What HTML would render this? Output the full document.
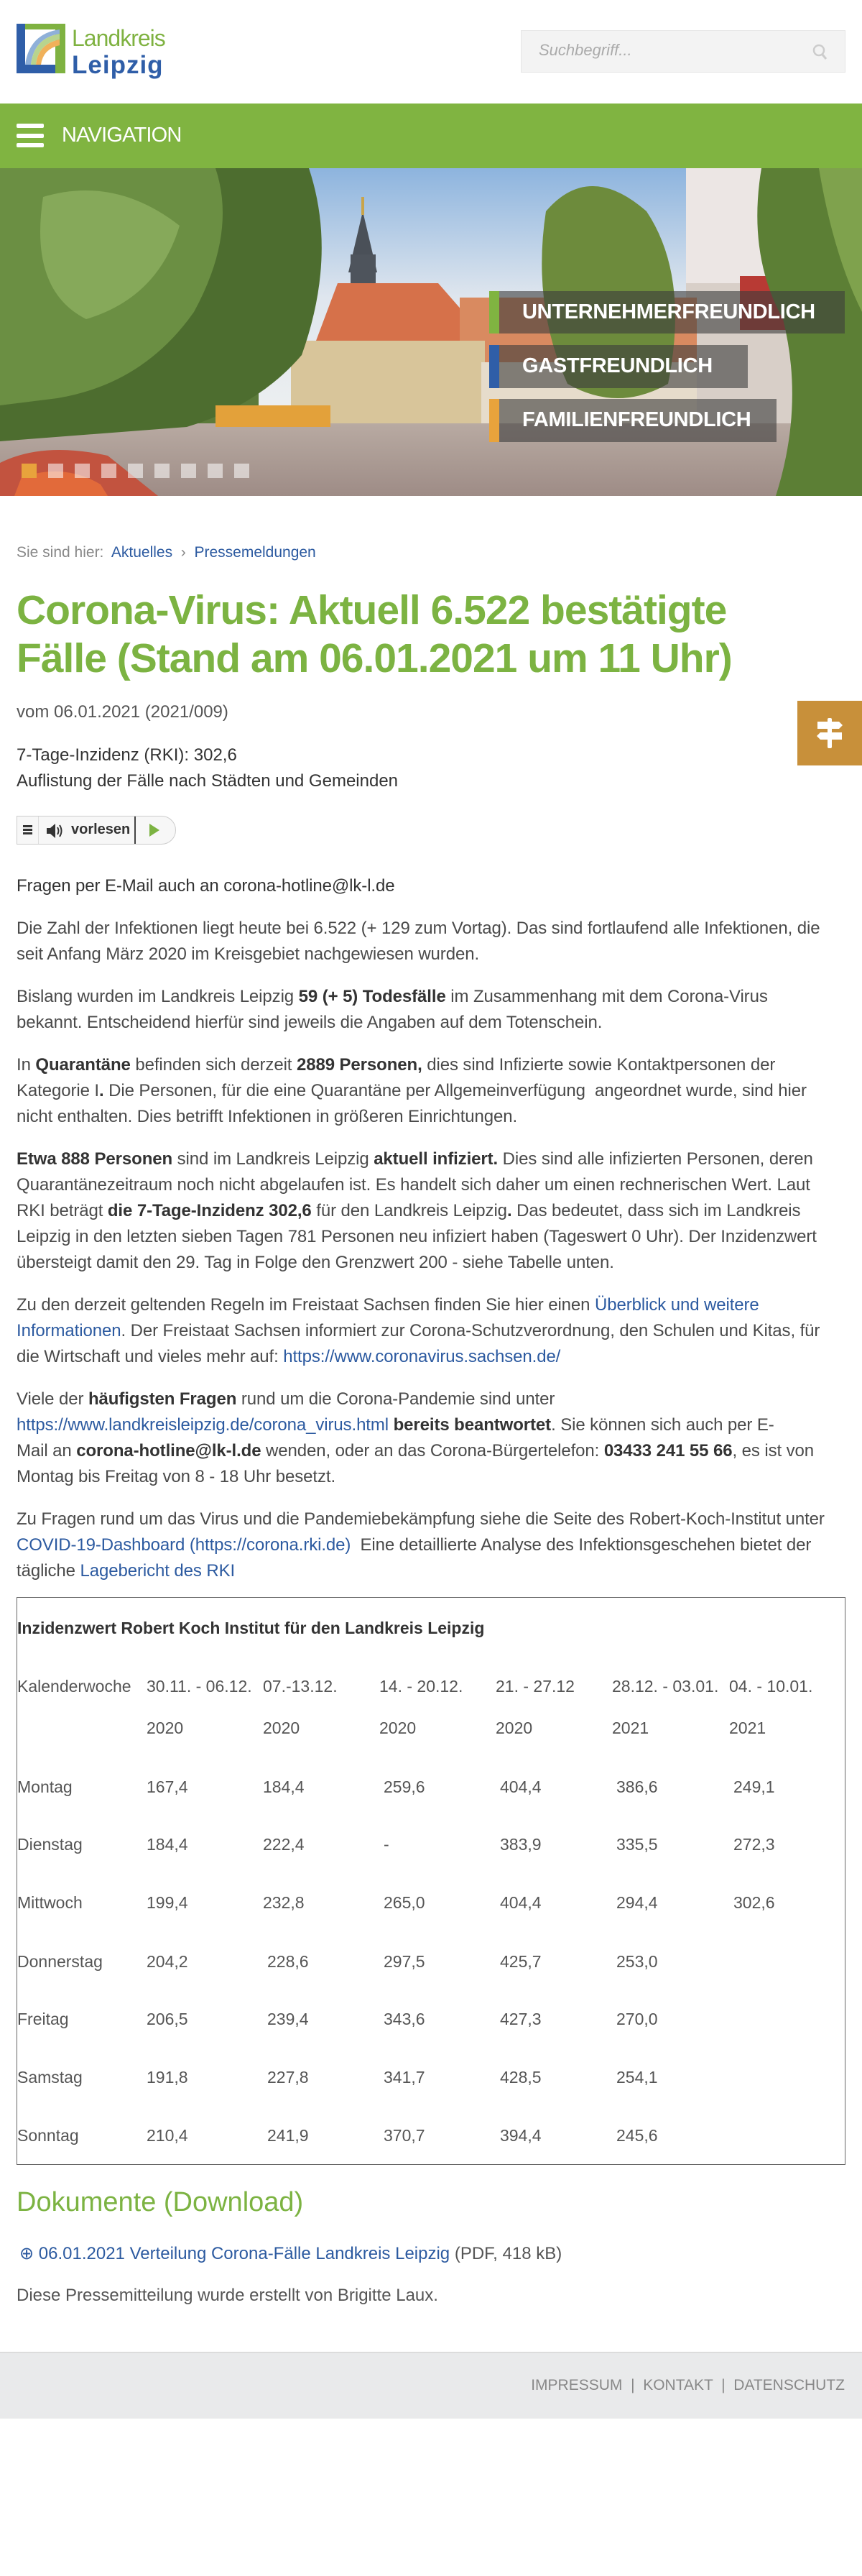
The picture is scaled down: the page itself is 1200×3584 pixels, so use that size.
<!DOCTYPE html>
<html><head><meta charset="utf-8">
<style>
*{margin:0;padding:0;box-sizing:border-box}
html,body{width:1200px;height:3584px;background:#fff;overflow:hidden}
body{position:relative;font-family:"Liberation Sans",Arial,sans-serif;color:#444}
.a{position:absolute;white-space:nowrap}
b{color:#333;font-weight:bold}
.lnk{color:#2c5aa0}
.flow{position:absolute;left:23px;top:1215px;font-size:24px;line-height:36px;color:#4a4a4a;white-space:nowrap;letter-spacing:-0.1px}
.flow p{margin-bottom:23px}
.cell{position:absolute;font-size:23px;color:#555;white-space:nowrap;line-height:30px}
</style></head><body>

<!-- logo -->
<svg class="a" style="left:23px;top:33px" width="210" height="80" viewBox="0 0 210 80">
 <rect x="0" y="0" width="68" height="69" fill="#2f5ea8"/>
 <rect x="12" y="0" width="56" height="57" fill="#fff"/>
 <rect x="54" y="0" width="14" height="69" fill="#7fb241"/>
 <rect x="12" y="0" width="56" height="8" fill="#7fb241"/>
 <path d="M12 57 Q18 14 60 8 L60 14 Q24 20 20 57Z" fill="#8fb0d8"/>
 <path d="M20 57 Q24 20 60 14 L60 22 Q30 28 27 57Z" fill="#b8d48e"/>
 <path d="M27 57 Q30 28 60 22 L60 30 Q37 35 34 57Z" fill="#f0b15a"/>
 <text x="77" y="31" font-family="Liberation Sans" font-size="32" fill="#7fb241" letter-spacing="-1">Landkreis</text>
 <text x="77" y="69" font-family="Liberation Sans" font-size="35" font-weight="bold" fill="#2f5ea8" letter-spacing="1">Leipzig</text>
</svg>

<!-- search -->
<div class="a" style="left:725px;top:42px;width:452px;height:59px;background:#f3f3f3;border:1px solid #e6e6e6"></div>
<div class="a" style="left:750px;top:57px;font-size:22px;font-style:italic;color:#aaa">Suchbegriff...</div>
<svg class="a" style="left:1130px;top:60px" width="24" height="26" viewBox="0 0 24 26"><circle cx="10" cy="10" r="7" fill="none" stroke="#ccc" stroke-width="2.5"/><path d="M15 16 L20 22" stroke="#ccc" stroke-width="3"/></svg>

<!-- nav -->
<div class="a" style="left:0;top:144px;width:1200px;height:90px;background:#80b441"></div>
<div class="a" style="left:23px;top:172px;width:38px;height:6px;background:#fff;border-radius:2px"></div>
<div class="a" style="left:23px;top:186px;width:38px;height:6px;background:#fff;border-radius:2px"></div>
<div class="a" style="left:23px;top:199px;width:38px;height:6px;background:#fff;border-radius:2px"></div>
<div class="a" style="left:86px;top:172px;font-size:29px;color:#fff;letter-spacing:-0.8px">NAVIGATION</div>

<!-- hero -->
<svg class="a" style="left:0;top:234px" width="1200" height="456" viewBox="0 0 1200 456">
 <defs><linearGradient id="sky" x1="0" y1="0" x2="0" y2="1"><stop offset="0" stop-color="#8db4de"/><stop offset="0.5" stop-color="#dfe6ee"/><stop offset="1" stop-color="#eef0f0"/></linearGradient>
 <linearGradient id="gr" x1="0" y1="0" x2="0" y2="1"><stop offset="0" stop-color="#b8aaa2"/><stop offset="1" stop-color="#9e8c86"/></linearGradient></defs>
 <rect width="1200" height="456" fill="#5b7a3a"/>
 <rect x="360" y="0" width="600" height="360" fill="url(#sky)"/>
 <rect x="955" y="0" width="245" height="370" fill="#ece6e4"/>
 <rect x="955" y="160" width="245" height="210" fill="#d8cfc8"/>
 <rect x="1030" y="150" width="70" height="75" fill="#b83a34"/>
 <path d="M485 145 L505 60 L525 145Z" fill="#4a5058"/>
 <rect x="488" y="120" width="35" height="90" fill="#4e545c"/>
 <rect x="503" y="40" width="4" height="25" fill="#c9a44a"/>
 <path d="M440 240 L470 160 L610 160 L680 240Z" fill="#d6714a"/>
 <rect x="640" y="180" width="330" height="90" fill="#d98a60"/>
 <rect x="405" y="240" width="270" height="150" fill="#d8c59a"/>
 <rect x="670" y="270" width="300" height="110" fill="#e6dccb"/>
 <rect x="0" y="355" width="1200" height="101" fill="url(#gr)"/>
 <path d="M0 0 H430 Q470 120 420 260 Q360 330 260 360 L0 380Z" fill="#4d6d2f"/>
 <path d="M0 0 H300 Q330 90 270 200 Q200 300 80 320 L0 330Z" fill="#6b8f43"/>
 <path d="M60 40 Q160 10 250 80 Q220 180 120 210 Q40 170 60 40Z" fill="#86a95a"/>
 <path d="M760 60 Q820 -10 900 60 Q960 150 930 300 Q860 340 790 300 Q740 190 760 60Z" fill="#6d8b3c"/>
 <path d="M1060 0 H1200 V456 H1080 Q1120 330 1090 210 Q1040 120 1060 0Z" fill="#5c7f35"/>
 <path d="M1140 0 H1200 V200 Q1160 120 1140 0Z" fill="#7fa24d"/>
 <rect x="300" y="330" width="160" height="30" fill="#e3a13a"/>
 <path d="M0 410 Q60 380 150 400 L220 456 H0Z" fill="#c2533f"/>
 <path d="M30 430 Q90 410 140 440 L150 456 H20Z" fill="#e26a3a"/>
</svg>
<div class="a" style="left:30px;top:645px;width:21px;height:20px;background:#e8a33c"></div>
<div class="a" style="left:67px;top:645px;width:21px;height:20px;background:rgba(255,255,255,.55)"></div>
<div class="a" style="left:104px;top:645px;width:21px;height:20px;background:rgba(255,255,255,.55)"></div>
<div class="a" style="left:141px;top:645px;width:21px;height:20px;background:rgba(255,255,255,.55)"></div>
<div class="a" style="left:178px;top:645px;width:21px;height:20px;background:rgba(255,255,255,.55)"></div>
<div class="a" style="left:215px;top:645px;width:21px;height:20px;background:rgba(255,255,255,.55)"></div>
<div class="a" style="left:252px;top:645px;width:21px;height:20px;background:rgba(255,255,255,.55)"></div>
<div class="a" style="left:289px;top:645px;width:21px;height:20px;background:rgba(255,255,255,.55)"></div>
<div class="a" style="left:326px;top:645px;width:21px;height:20px;background:rgba(255,255,255,.55)"></div>

<div class="a" style="left:681px;top:405px;width:495px;height:59px;background:rgba(60,60,60,.6);border-left:14px solid #80b441"></div>
<div class="a" style="left:681px;top:480px;width:360px;height:60px;background:rgba(60,60,60,.6);border-left:14px solid #2f5ea8"></div>
<div class="a" style="left:681px;top:555px;width:400px;height:60px;background:rgba(60,60,60,.6);border-left:14px solid #e8a33c"></div>
<div class="a" style="left:727px;top:418px;font-size:29px;font-weight:bold;color:#fff;letter-spacing:-0.3px">UNTERNEHMERFREUNDLICH</div>
<div class="a" style="left:727px;top:493px;font-size:29px;font-weight:bold;color:#fff;letter-spacing:-0.3px">GASTFREUNDLICH</div>
<div class="a" style="left:727px;top:568px;font-size:29px;font-weight:bold;color:#fff;letter-spacing:-0.3px">FAMILIENFREUNDLICH</div>

<!-- breadcrumb -->
<div class="a" style="left:23px;top:757px;font-size:21px;color:#888">Sie sind hier:&nbsp; <span class="lnk">Aktuelles</span> &nbsp;›&nbsp; <span class="lnk">Pressemeldungen</span></div>

<!-- title -->
<div class="a" style="left:23px;top:816px;font-size:57px;line-height:67px;font-weight:bold;color:#7cb342;letter-spacing:-1px">Corona-Virus: Aktuell 6.522 bestätigte<br>Fälle (Stand am 06.01.2021 um 11 Uhr)</div>

<div class="a" style="left:23px;top:977px;font-size:24px;color:#555">vom 06.01.2021 (2021/009)</div>
<div class="a" style="left:23px;top:1033px;font-size:24px;line-height:36px;color:#333">7-Tage-Inzidenz (RKI): 302,6<br>Auflistung der Fälle nach Städten und Gemeinden</div>

<!-- side button -->
<div class="a" style="left:1110px;top:975px;width:90px;height:90px;background:#c8903a"></div>
<svg class="a" style="left:1130px;top:995px" width="50" height="50" viewBox="0 0 50 50"><rect x="22" y="4" width="6" height="42" rx="2" fill="#fff"/><path d="M8 9 H38 L43 14 L38 19 H8Z" fill="#fff"/><path d="M42 24 H12 L7 29 L12 34 H42Z" fill="#fff"/></svg>

<!-- vorlesen -->
<div class="a" style="left:23px;top:1135px;width:222px;height:40px;border:1px solid #ccc;border-radius:0 20px 20px 0;background:#f7f7f7"></div>
<div class="a" style="left:53px;top:1136px;width:1px;height:38px;background:#ddd"></div>
<div class="a" style="left:187px;top:1136px;width:2px;height:38px;background:#444"></div>
<div class="a" style="left:32px;top:1148px;width:13px;height:3px;background:#333"></div>
<div class="a" style="left:32px;top:1153px;width:13px;height:3px;background:#333"></div>
<div class="a" style="left:32px;top:1158px;width:13px;height:3px;background:#333"></div>
<svg class="a" style="left:64px;top:1145px" width="26" height="22" viewBox="0 0 26 22"><path d="M1 7 H6 L13 1 V21 L6 15 H1Z" fill="#333"/><path d="M16 6 Q19 11 16 16 M19 3 Q24 11 19 19" stroke="#333" stroke-width="2" fill="none"/></svg>
<div class="a" style="left:99px;top:1143px;font-size:20px;font-weight:bold;color:#333">vorlesen</div>
<svg class="a" style="left:207px;top:1145px" width="16" height="20" viewBox="0 0 16 20"><path d="M1 1 L15 10 L1 19Z" fill="#7cb342"/></svg>

<!-- body -->
<div class="flow">
<p style="color:#333">Fragen per E-Mail auch an corona-hotline@lk-l.de</p>
<p>Die Zahl der Infektionen liegt heute bei 6.522 (+ 129 zum Vortag). Das sind fortlaufend alle Infektionen, die<br>seit Anfang März 2020 im Kreisgebiet nachgewiesen wurden.</p>
<p>Bislang wurden im Landkreis Leipzig <b>59 (+ 5) Todesfälle</b> im Zusammenhang mit dem Corona-Virus<br>bekannt. Entscheidend hierfür sind jeweils die Angaben auf dem Totenschein.</p>
<p>In <b>Quarantäne</b> befinden sich derzeit <b>2889 Personen,</b> dies sind Infizierte sowie Kontaktpersonen der<br>Kategorie I<b>.</b> Die Personen, für die eine Quarantäne per Allgemeinverfügung&nbsp; angeordnet wurde, sind hier<br>nicht enthalten. Dies betrifft Infektionen in größeren Einrichtungen.</p>
<p><b>Etwa 888 Personen</b> sind im Landkreis Leipzig <b>aktuell infiziert.</b> Dies sind alle infizierten Personen, deren<br>Quarantänezeitraum noch nicht abgelaufen ist. Es handelt sich daher um einen rechnerischen Wert. Laut<br>RKI beträgt <b>die 7-Tage-Inzidenz 302,6</b> für den Landkreis Leipzig<b>.</b> Das bedeutet, dass sich im Landkreis<br>Leipzig in den letzten sieben Tagen 781 Personen neu infiziert haben (Tageswert 0 Uhr). Der Inzidenzwert<br>übersteigt damit den 29. Tag in Folge den Grenzwert 200 - siehe Tabelle unten.</p>
<p>Zu den derzeit geltenden Regeln im Freistaat Sachsen finden Sie hier einen <span class="lnk">Überblick und weitere</span><br><span class="lnk">Informationen</span>. Der Freistaat Sachsen informiert zur Corona-Schutzverordnung, den Schulen und Kitas, für<br>die Wirtschaft und vieles mehr auf: <span class="lnk">https://www.coronavirus.sachsen.de/</span></p>
<p>Viele der <b>häufigsten Fragen</b> rund um die Corona-Pandemie sind unter<br><span class="lnk">https://www.landkreisleipzig.de/corona_virus.html</span> <b>bereits beantwortet</b>. Sie können sich auch per E-<br>Mail an <b>corona-hotline@lk-l.de</b> wenden, oder an das Corona-Bürgertelefon: <b>03433 241 55 66</b>, es ist von<br>Montag bis Freitag von 8 - 18 Uhr besetzt.</p>
<p>Zu Fragen rund um das Virus und die Pandemiebekämpfung siehe die Seite des Robert-Koch-Institut unter<br><span class="lnk">COVID-19-Dashboard (https://corona.rki.de)</span>&nbsp; Eine detaillierte Analyse des Infektionsgeschehen bietet der<br>tägliche <span class="lnk">Lagebericht des RKI</span></p>
</div>

<!-- table -->
<div class="a" style="left:23px;top:2222px;width:1154px;height:790px;border:1px solid #666"></div>
<div class="cell" style="left:24px;top:2250px;font-weight:bold;color:#333">Inzidenzwert Robert Koch Institut für den Landkreis Leipzig</div>
<div class="cell" style="left:24px;top:2331px">Kalenderwoche</div>
<div class="cell" style="left:204px;top:2331px">30.11. - 06.12.</div>
<div class="cell" style="left:366px;top:2331px">07.-13.12.</div>
<div class="cell" style="left:528px;top:2331px">14. - 20.12.</div>
<div class="cell" style="left:690px;top:2331px">21. - 27.12</div>
<div class="cell" style="left:852px;top:2331px">28.12. - 03.01.</div>
<div class="cell" style="left:1015px;top:2331px">04. - 10.01.</div>
<div class="cell" style="left:204px;top:2389px">2020</div>
<div class="cell" style="left:366px;top:2389px">2020</div>
<div class="cell" style="left:528px;top:2389px">2020</div>
<div class="cell" style="left:690px;top:2389px">2020</div>
<div class="cell" style="left:852px;top:2389px">2021</div>
<div class="cell" style="left:1015px;top:2389px">2021</div>

<div class="cell" style="left:24px;top:2471px">Montag</div><div class="cell" style="left:204px;top:2471px">167,4</div><div class="cell" style="left:366px;top:2471px">184,4</div><div class="cell" style="left:534px;top:2471px">259,6</div><div class="cell" style="left:696px;top:2471px">404,4</div><div class="cell" style="left:858px;top:2471px">386,6</div><div class="cell" style="left:1021px;top:2471px">249,1</div>
<div class="cell" style="left:24px;top:2551px">Dienstag</div><div class="cell" style="left:204px;top:2551px">184,4</div><div class="cell" style="left:366px;top:2551px">222,4</div><div class="cell" style="left:534px;top:2551px">-</div><div class="cell" style="left:696px;top:2551px">383,9</div><div class="cell" style="left:858px;top:2551px">335,5</div><div class="cell" style="left:1021px;top:2551px">272,3</div>
<div class="cell" style="left:24px;top:2632px">Mittwoch</div><div class="cell" style="left:204px;top:2632px">199,4</div><div class="cell" style="left:366px;top:2632px">232,8</div><div class="cell" style="left:534px;top:2632px">265,0</div><div class="cell" style="left:696px;top:2632px">404,4</div><div class="cell" style="left:858px;top:2632px">294,4</div><div class="cell" style="left:1021px;top:2632px">302,6</div>
<div class="cell" style="left:24px;top:2714px">Donnerstag</div><div class="cell" style="left:204px;top:2714px">204,2</div><div class="cell" style="left:372px;top:2714px">228,6</div><div class="cell" style="left:534px;top:2714px">297,5</div><div class="cell" style="left:696px;top:2714px">425,7</div><div class="cell" style="left:858px;top:2714px">253,0</div>
<div class="cell" style="left:24px;top:2794px">Freitag</div><div class="cell" style="left:204px;top:2794px">206,5</div><div class="cell" style="left:372px;top:2794px">239,4</div><div class="cell" style="left:534px;top:2794px">343,6</div><div class="cell" style="left:696px;top:2794px">427,3</div><div class="cell" style="left:858px;top:2794px">270,0</div>
<div class="cell" style="left:24px;top:2875px">Samstag</div><div class="cell" style="left:204px;top:2875px">191,8</div><div class="cell" style="left:372px;top:2875px">227,8</div><div class="cell" style="left:534px;top:2875px">341,7</div><div class="cell" style="left:696px;top:2875px">428,5</div><div class="cell" style="left:858px;top:2875px">254,1</div>
<div class="cell" style="left:24px;top:2956px">Sonntag</div><div class="cell" style="left:204px;top:2956px">210,4</div><div class="cell" style="left:372px;top:2956px">241,9</div><div class="cell" style="left:534px;top:2956px">370,7</div><div class="cell" style="left:696px;top:2956px">394,4</div><div class="cell" style="left:858px;top:2956px">245,6</div>

<!-- documents -->
<div class="a" style="left:23px;top:3043px;font-size:38px;color:#7cb342">Dokumente (Download)</div>
<div class="a" style="left:27px;top:3121px;font-size:24px;color:#555"><span class="lnk">&#x2295; 06.01.2021 Verteilung Corona-Fälle Landkreis Leipzig</span> (PDF, 418 kB)</div>
<div class="a" style="left:23px;top:3180px;font-size:24px;color:#555">Diese Pressemitteilung wurde erstellt von Brigitte Laux.</div>

<!-- footer -->
<div class="a" style="left:0;top:3272px;width:1200px;height:93px;background:#e9eaeb;border-top:2px solid #dcdcdc"></div>
<div class="a" style="right:24px;top:3307px;font-size:21px;color:#888">IMPRESSUM &nbsp;|&nbsp; KONTAKT &nbsp;|&nbsp; DATENSCHUTZ</div>
</body></html>
